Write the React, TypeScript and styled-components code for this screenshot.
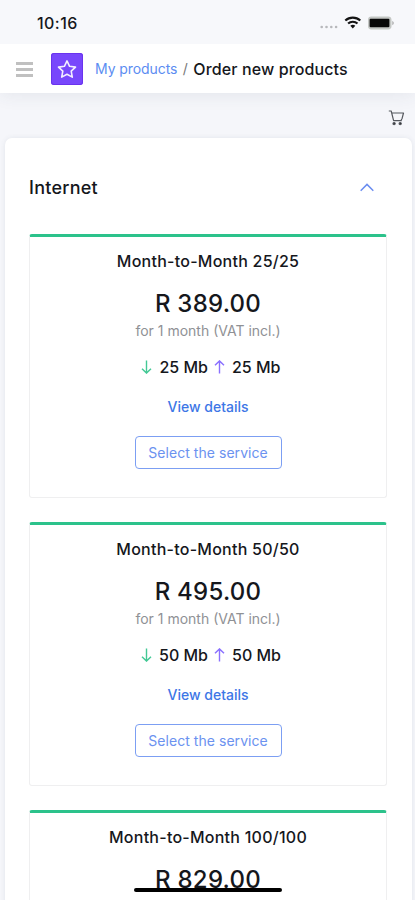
import React from "react";
import styled, { createGlobalStyle } from "styled-components";

const GlobalStyle = createGlobalStyle`
  * { box-sizing: border-box; }
  html, body { margin: 0; padding: 0; }
  body {
    background: #f6f7fb;
    font-family: Inter, "Liberation Sans", sans-serif;
    color: #15171c;
    overflow: hidden;
  }
`;

const Screen = styled.div`
  position: relative;
  width: 415px;
  height: 900px;
  overflow: hidden;
  display: flex;
  flex-direction: column;
  background: #f5f6fa;
`;

const StatusBar = styled.div`
  height: 44px;
  flex: none;
  display: flex;
  justify-content: space-between;
  align-items: center;
  padding: 2px 20px 0 37px;
  background: #f7f8fb;
`;

const Clock = styled.span`
  font-size: 16px;
  line-height: 18px;
  font-weight: 500;
  letter-spacing: 0.45px;
`;

const StatusIcons = styled.div`
  display: flex;
  align-items: center;
  height: 16px;

  svg { display: block; }
`;

const Header = styled.header`
  height: 49px;
  flex: none;
  display: flex;
  align-items: center;
  padding: 1px 16px 0;
  background: #fff;
  box-shadow: 0 2px 18px rgba(60, 70, 90, 0.09);
  clip-path: inset(0 0 -40px 0);
  z-index: 1;
`;

const MenuButton = styled.button`
  width: 17px;
  height: 15px;
  padding: 0;
  border: 0;
  background: none;
  display: flex;
  flex-direction: column;
  justify-content: space-between;
`;

const MenuLine = styled.span`
  width: 17px;
  height: 3px;
  background: #c0c0c0;
`;

const StarTile = styled.div`
  width: 32px;
  height: 32px;
  margin: 0 12px 0 18px;
  border-radius: 3px;
  background: #7847fc;
  box-shadow: inset 0 0 0 1px #6a33ee;
  display: flex;
  align-items: center;
  justify-content: center;
`;

const Breadcrumb = styled.nav`
  display: flex;
  font-size: 14px;
  line-height: 20px;
  white-space: pre;
`;

const CrumbLink = styled.a`
  color: #5c8df2;
  letter-spacing: -0.08px;
`;

const Separator = styled.span`
  width: 16px;
  text-align: center;
  color: #777;
`;

const CrumbCurrent = styled.span`
  font-size: 16px;
  font-weight: 500;
  letter-spacing: 0.12px;
`;

const Toolbar = styled.div`
  height: 45px;
  flex: none;
  display: flex;
  justify-content: flex-end;
  align-items: center;
  padding: 4px 10px 0 0;
`;

const Panel = styled.section`
  flex: none;
  margin: 0 3px 0 5px;
  padding: 0 25px 0 24px;
  border-radius: 7px;
  background: #fff;
  box-shadow: 0 0 5px rgba(70, 85, 110, 0.1);
`;

const PanelHeader = styled.div`
  height: 96px;
  display: flex;
  align-items: center;
  justify-content: space-between;
  padding: 3px 13px 0 0;
`;

const PanelTitle = styled.h2`
  margin: 0;
  font-size: 18px;
  line-height: 24px;
  font-weight: 500;
  letter-spacing: 0.25px;
`;

const PlanList = styled.div`
  display: flex;
  flex-direction: column;
  gap: 24px;
`;

const PlanCard = styled.article`
  height: 264px;
  border: 1px solid #efeff0;
  border-top: 3px solid #2cc28b;
  border-radius: 3px;
  display: flex;
  flex-direction: column;
  align-items: center;
  padding-top: 13px;
`;

const PlanName = styled.h3`
  margin: 0;
  font-size: 16px;
  line-height: 22px;
  font-weight: 500;
  letter-spacing: 0.25px;
`;

const Price = styled.div`
  margin-top: 16px;
  font-size: 24px;
  line-height: 32px;
  font-weight: 500;
  letter-spacing: 0.25px;
`;

const Term = styled.div`
  margin-top: 2px;
  font-size: 14px;
  line-height: 18px;
  color: #8f9195;
  letter-spacing: 0;
`;

const Speeds = styled.div`
  margin-top: 16px;
  height: 22px;
  display: flex;
  align-items: center;
  padding-left: 6px;
  font-size: 16px;
  line-height: 22px;
  font-weight: 500;
`;

const Speed = styled.span`
  display: flex;
  align-items: center;
  gap: 7px;

  & + & { margin-left: 6px; }
`;

const DetailsLink = styled.a`
  margin-top: 19px;
  font-size: 14px;
  line-height: 20px;
  font-weight: 500;
  color: #3d76e6;
  letter-spacing: 0;
`;

const SelectButton = styled.button`
  margin-top: 19px;
  width: 147px;
  height: 33px;
  padding: 0;
  border: 1px solid #7c9ff3;
  border-radius: 4px;
  background: #fff;
  color: #6b92f0;
  font: 400 14px/20px Inter, "Liberation Sans", sans-serif;
  letter-spacing: 0.05px;
`;

const HomeIndicator = styled.div`
  position: absolute;
  left: 134px;
  top: 888px;
  width: 148px;
  height: 4px;
  border-radius: 2px;
  background: #000;
  z-index: 2;
`;

const DeviceStatus = () => (
  <StatusIcons>
    <svg width="76" height="16" viewBox="0 0 76 16">
      <g fill="#b7b8bb">
        <circle cx="2.7" cy="12" r="1.3" />
        <circle cx="7.5" cy="12" r="1.3" />
        <circle cx="12.3" cy="12" r="1.3" />
        <circle cx="17.1" cy="12" r="1.3" />
      </g>
      <g fill="none" stroke="#141414" strokeWidth="2.1">
        <path d="M26.3 5.6a11 11 0 0 1 15 0" />
        <path d="M29.1 8.6a6.8 6.8 0 0 1 9.4 0" />
      </g>
      <path d="M31.3 10.8a3.7 3.7 0 0 1 5 0L33.8 13.4z" fill="#141414" />
      <rect x="49" y="1.5" width="23.5" height="13" rx="3.4" fill="#c4c7c4" />
      <rect x="50.6" y="3.7" width="19.8" height="8.6" rx="1" fill="#080808" />
      <path d="M73.3 5.7q3 2.3 0 4.6z" fill="#aaa" />
    </svg>
  </StatusIcons>
);

const StarIcon = () => (
  <svg width="20" height="20" viewBox="0 0 20 20" fill="none" stroke="#f3edff" strokeWidth="1.6" strokeLinejoin="round">
    <path d="M10 1.9l2.6 5.4 5.9.8-4.3 4.1 1.1 5.9-5.3-2.8-5.3 2.8 1.1-5.9L1.5 8.1l5.9-.8z" />
  </svg>
);

const CartIcon = () => (
  <svg width="17" height="16" viewBox="0 0 17 16" fill="none" stroke="#55585e" strokeWidth="1.2">
    <path d="M.8 1h2.4l2.4 9.6h8.2M3.8 3h11.7l-1.4 5.4L13 10.6" strokeLinejoin="round" />
    <circle cx="6.1" cy="13.6" r="1.1" fill="#222" />
    <circle cx="12.2" cy="13.6" r="1.1" fill="#222" />
  </svg>
);

const ChevronUp = () => (
  <svg width="14" height="9" viewBox="0 0 14 9" fill="none" stroke="#6b8df0" strokeWidth="1.5">
    <path d="M.7 7.7L7 1.4l6.3 6.3" />
  </svg>
);

const Arrow = ({ up }: { up?: boolean }) => (
  <svg width="11" height="14" viewBox="0 0 11 14" fill="none" stroke={up ? "#8a70ff" : "#43c995"} strokeWidth="1.4">
    <path d={up ? "M5.5 13.5V1M1 5.3L5.5.9 10 5.3" : "M5.5.5V13M1 8.7l4.5 4.4L10 8.7"} />
  </svg>
);

const plans = [
  { name: "Month-to-Month 25/25", price: "R 389.00", speed: "25 Mb" },
  { name: "Month-to-Month 50/50", price: "R 495.00", speed: "50 Mb" },
  { name: "Month-to-Month 100/100", price: "R 829.00" },
];

export default function App() {
  return (
    <>
      <GlobalStyle />
      <Screen>
        <StatusBar>
          <Clock>10:16</Clock>
          <DeviceStatus />
        </StatusBar>
        <Header>
          <MenuButton aria-label="Menu">
            <MenuLine />
            <MenuLine />
            <MenuLine />
          </MenuButton>
          <StarTile><StarIcon /></StarTile>
          <Breadcrumb>
            <CrumbLink>My products</CrumbLink>
            <Separator>/</Separator>
            <CrumbCurrent>Order new products</CrumbCurrent>
          </Breadcrumb>
        </Header>
        <Toolbar><CartIcon /></Toolbar>
        <Panel>
          <PanelHeader>
            <PanelTitle>Internet</PanelTitle>
            <ChevronUp />
          </PanelHeader>
          <PlanList>
            {plans.map((plan) => (
              <PlanCard key={plan.name}>
                <PlanName>{plan.name}</PlanName>
                <Price>{plan.price}</Price>
                {plan.speed && (
                  <>
                    <Term>for 1 month (VAT incl.)</Term>
                    <Speeds>
                      <Speed><Arrow />{plan.speed}</Speed>
                      <Speed><Arrow up />{plan.speed}</Speed>
                    </Speeds>
                    <DetailsLink>View details</DetailsLink>
                    <SelectButton>Select the service</SelectButton>
                  </>
                )}
              </PlanCard>
            ))}
          </PlanList>
        </Panel>
        <HomeIndicator />
      </Screen>
    </>
  );
}
